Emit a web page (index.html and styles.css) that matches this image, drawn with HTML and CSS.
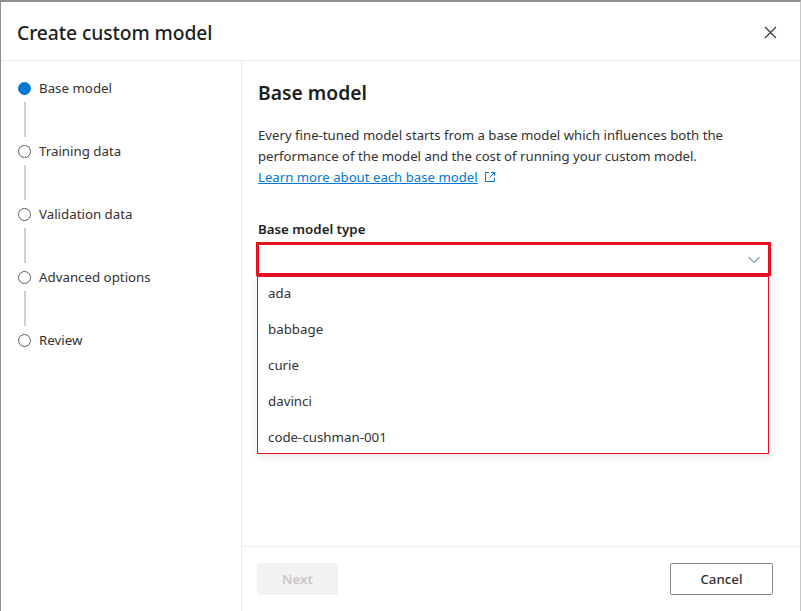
FILE: index.html
```html
<!DOCTYPE html>
<html>
<head>
<meta charset="utf-8">
<link rel="stylesheet" href="styles.css">
</head>
<body>
<div class="dialog">
  <header class="header">
    <h1 class="title">Create custom model</h1>
    <button class="close" aria-label="Close">
      <svg width="13" height="13" viewBox="0 0 13 13"><path d="M1 1 L12 12 M12 1 L1 12" stroke="#323130" stroke-width="1.1" fill="none"/></svg>
    </button>
  </header>
  <div class="body">
    <nav class="steps">
      <div class="step active"><span class="dot"></span><span class="label">Base model</span></div>
      <div class="connector"></div>
      <div class="step"><span class="dot"></span><span class="label">Training data</span></div>
      <div class="connector"></div>
      <div class="step"><span class="dot"></span><span class="label">Validation data</span></div>
      <div class="connector"></div>
      <div class="step"><span class="dot"></span><span class="label">Advanced options</span></div>
      <div class="connector"></div>
      <div class="step"><span class="dot"></span><span class="label">Review</span></div>
    </nav>
    <main class="main">
      <section class="content">
        <h2 class="heading">Base model</h2>
        <p class="desc">Every fine-tuned model starts from a base model which influences both the performance of the model and the cost of running your custom model.<br><a class="link" href="#">Learn more about each base model</a><svg class="ext" width="12" height="12" viewBox="0 0 12 12"><path d="M5 1.5 H1.5 V10.5 H10.5 V7" stroke="#0078d4" stroke-width="1" fill="none"/><path d="M7 1.5 H10.5 V5 M10.5 1.5 L5.5 6.5" stroke="#0078d4" stroke-width="1" fill="none"/></svg></p>
        <div class="field">
          <div class="field-label">Base model type</div>
          <div class="select">
            <svg class="chev" width="12" height="8" viewBox="0 0 12 8"><path d="M0.5 1 L6 6.5 L11.5 1" stroke="#7f9ab8" stroke-width="1.1" fill="none"/></svg>
            <ul class="menu">
              <li>ada</li>
              <li>babbage</li>
              <li>curie</li>
              <li>davinci</li>
              <li>code-cushman-001</li>
            </ul>
          </div>
        </div>
      </section>
      <footer class="footer">
        <button class="btn next" disabled>Next</button>
        <button class="btn cancel">Cancel</button>
      </footer>
    </main>
  </div>
</div>
</body>
</html>
```
FILE: styles.css
```css
* { box-sizing: border-box; }
html, body { margin: 0; padding: 0; background: #fff; }
body {
  font-family: "Noto Sans", "Open Sans", sans-serif;
  color: #323130;
}
.dialog {
  width: 801px;
  height: 611px;
  border-top: 2px solid #8f8f8f;
  border-left: 1px solid #8f8f8f;
  border-right: 1px solid #c8c8c8;
  display: flex;
  flex-direction: column;
}
.header {
  height: 59px;
  border-bottom: 1px solid #edebe9;
  display: flex;
  align-items: center;
  justify-content: space-between;
  padding: 0 23px 0 16px;
}
.title {
  margin: 0;
  font-size: 19.3px;
  font-weight: 500;
  color: #201f1e;
  letter-spacing: -0.1px;
  padding-top: 2px;
}
.close {
  background: none;
  border: 0;
  padding: 0;
  display: flex;
  margin-top: 2px;
}
.body {
  flex: 1;
  display: flex;
}
.steps {
  flex: none;
  width: 241px;
  border-right: 1px solid #edebe9;
  padding: 17px 0 0 17px;
}
.step {
  display: flex;
  align-items: center;
  height: 20px;
}
.dot {
  width: 13px;
  height: 13px;
  border-radius: 50%;
  border: 1px solid #605e5c;
  margin-right: 8px;
  flex: none;
}
.step.active .dot {
  background: #0078d4;
  border-color: #0078d4;
}
.label {
  font-size: 13.3px;
  color: #323130;
}
.connector {
  width: 2px;
  height: 35px;
  background: #d2d0ce;
  margin: 4px 0 4px 5.5px;
}
.main {
  flex: 1;
  min-width: 0;
  display: flex;
  flex-direction: column;
}
.content {
  flex: 1;
  padding: 18px 20px 0 16px;
}
.heading {
  margin: 0;
  font-size: 19.3px;
  font-weight: 600;
  line-height: 28px;
  color: #201f1e;
}
.desc {
  margin: 18px 0 0;
  font-size: 13.2px;
  line-height: 21px;
  color: #323130;
}
.link {
  color: #0078d4;
  text-decoration: underline;
}
.ext {
  margin-left: 6px;
  vertical-align: -1px;
}
.field {
  margin-top: 31px;
}
.field-label {
  font-size: 13.3px;
  font-weight: 600;
  line-height: 20px;
  color: #201f1e;
  margin-bottom: 3px;
}
.select {
  position: relative;
  height: 34px;
  border: 3px solid #e81123;
  margin-left: -2px;
  width: 515px;
}
.chev {
  position: absolute;
  right: 8px;
  top: 11px;
}
.menu {
  position: absolute;
  left: -2px;
  top: 31px;
  width: 512px;
  margin: 0;
  padding: 0;
  list-style: none;
  border: 1px solid #e81123;
  background: #fff;
  box-shadow: 0 3px 8px rgba(0,0,0,0.1);
}
.menu li {
  height: 36px;
  line-height: 36px;
  padding-left: 10px;
  font-size: 13.3px;
  color: #323130;
}
.menu li:first-child { margin-top: -2px; }
.menu li:last-child { margin-bottom: -2px; }
.footer {
  height: 65px;
  border-top: 1px solid #edebe9;
  display: flex;
  align-items: center;
  justify-content: space-between;
  padding: 0 27px 1px 15px;
}
.btn {
  height: 32px;
  font-family: "Noto Sans", "Open Sans", sans-serif;
  font-size: 13.3px;
  font-weight: 500;
  border-radius: 2px;
}
.next {
  width: 81px;
  background: #f3f2f1;
  border: 0;
  color: #c8c6c4;
  font-weight: 600;
}
.cancel {
  background: #fff;
  border: 1px solid #8a8886;
  color: #323130;
  padding: 0;
  width: 103px;
}
```
